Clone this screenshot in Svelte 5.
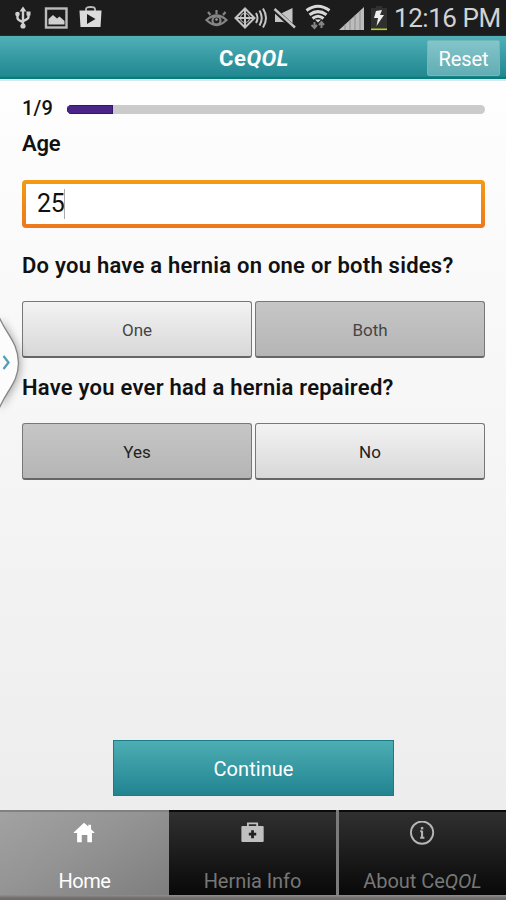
<script>
  let age = $state('25');
  let sides = $state('Both');
  let repaired = $state('Yes');
  const step = 1;
  const total = 9;
</script>

<div class="phone">
  <div class="status">
    <svg class="status-icons" width="390" height="36" viewBox="0 0 390 36">
      <g stroke="#d0d0d0" fill="none" stroke-width="2.400">
        <path d="M23 9V26M17.500 14V18Q17.500 20 23 22M28.500 13V17Q28.500 19 23 21" />
      </g>
      <g fill="#d0d0d0">
        <path d="M23 6.500L26.500 11.500H19.500Z" />
        <circle cx="23" cy="26" r="2.600" />
        <rect x="26.500" y="11.500" width="4" height="4" />
        <circle cx="17.500" cy="14" r="2.300" />
      </g>
      <rect x="46" y="8.500" width="20.500" height="19" fill="none" stroke="#bcbcbc" stroke-width="2.400" />
      <path d="M48.500 24.500V19L53 15L57 18.500L59.500 16.500L64.500 21V24.500Z" fill="#d0d0d0" />
      <path d="M86 11V9Q86 7 90.500 7T95 9V11" fill="none" stroke="#bcbcbc" stroke-width="1.800" />
      <path d="M79.500 10.500H101.500L100.500 27H80.500Z" fill="#dcdcdc" />
      <path d="M87 14L95.500 19L87 24Z" fill="#1c1c1c" />

      <g stroke="#858585" fill="none" stroke-width="2.200">
        <path d="M206.500 20Q216.500 11 226.500 20Q216.500 30 206.500 20Z" />
        <path d="M216.500 10V14M208 12L210.500 15M225.500 12L223 15" />
        <circle cx="216.500" cy="20.500" r="4" />
      </g>
      <circle cx="216.500" cy="19.500" r="1.300" fill="#a0a0a0" />
      <g stroke="#c4c4c4" fill="none" stroke-width="2">
        <path d="M235.500 18L245 8.500L254.500 18L245 27.500Z" />
        <path d="M235 18H255M245 8V28" />
        <circle cx="245" cy="18" r="4.500" stroke-width="1.200" />
        <path d="M256 13Q259 18 256 23M259.500 10.500Q264 18 259.500 25.500M263 8.500Q269 18 263 27.500" />
      </g>
      <path d="M275 13H282L292.500 8V25.500L289 24L283 22H275Z" fill="#c4c4c4" />
      <path d="M273 8.500L294 28" stroke="#1c1c1c" stroke-width="5" />
      <path d="M274.500 9L295 27.500" stroke="#c4c4c4" stroke-width="2.400" />
      <g stroke="#d8d8d8" fill="none" stroke-width="3">
        <path d="M306.500 10.500Q318 2 329.500 10.500M309.500 14.800Q318 8.500 326.500 14.800M312.500 18.500Q318 14 323.500 18.500" />
      </g>
      <path d="M315 19.500H321L318 22.500Z" fill="#e0e0e0" />
      <g stroke="#858585" fill="none" stroke-width="2">
        <path d="M314.500 22V28M311.500 25L314.500 28L317 25M321.500 28V22M319 25L321.500 22L324 25" />
      </g>
      <path d="M339 30L364 7V30Z" fill="#bcbcbc" />
      <path d="M345 24.500V30M350 20V30M355 15.500V30M360 11V30" stroke="#8e8e8e" stroke-width="1" />
      <path d="M372 8H376V6H382V8H387V29H371V8Z" fill="#303030" />
      <path d="M376 11L382 10L380 15H384L376.500 26L378 18H374Z" fill="#eee" />
      <path d="M371 29.300H387" stroke="#b4d21c" stroke-width="1.600" />
    </svg>
    <span class="clock">12:16 PM</span>
  </div>

  <header>
    <h1>Ce<i>QOL</i></h1>
    <button class="reset">Reset</button>
  </header>

  <main>
    <div class="progress">
      <span>{step}/{total}</span>
      <div class="track"><div class="bar" style="width: {(step / total) * 100}%"></div></div>
    </div>
    <h2 class="age-label">Age</h2>
    <div class="field"><span>{age}</span><b class="caret"></b></div>

    <h2 class="first">Do you have a hernia on one or both sides?</h2>
    <div class="options">
      {#each ['One', 'Both'] as option}
        <button class:selected={sides === option} onclick={() => (sides = option)}>{option}</button>
      {/each}
    </div>
    <h2 class="second">Have you ever had a hernia repaired?</h2>
    <div class="options dark">
      {#each ['Yes', 'No'] as option}
        <button class:selected={repaired === option} onclick={() => (repaired = option)}>{option}</button>
      {/each}
    </div>
    <button class="continue">Continue</button>
  </main>

  <nav>
    <div class="tab active">
      <svg width="28" height="28" viewBox="0 0 28 28">
        <path d="M13 2L17.500 6V4H20.500V8.800L24 12V13H21.500V23H16.500V15H10.500V23H5.500V13H2V12Z" fill="#fff" />
      </svg>
      <span>Home</span>
    </div>
    <div class="tab">
      <svg width="28" height="28" viewBox="0 0 28 28">
        <path d="M8.500 7V2.500H18.500V7" fill="none" stroke="#c0c0c0" stroke-width="2" />
        <rect x="1.500" y="5.500" width="24" height="17" rx="1" fill="#c0c0c0" />
        <path d="M13.500 10V18.500M9.500 14.200H17.500" stroke="#202020" stroke-width="3" />
      </svg>
      <span>Hernia Info</span>
    </div>
    <div class="tab">
      <svg width="28" height="28" viewBox="0 0 28 28">
        <circle cx="13" cy="12.500" r="12" fill="none" stroke="#b5b5b5" stroke-width="2" />
        <path d="M13 10.500V18.500M11 11H13M11 18H15.500" stroke="#b5b5b5" stroke-width="2.200" />
        <rect x="11.700" y="6.500" width="2.600" height="2.600" fill="#b5b5b5" />
      </svg>
      <span class="about">About Ce<i>QOL</i></span>
    </div>
  </nav>

  <div class="drawer">
    <svg width="32" height="110" viewBox="0 0 32 110">
      <path d="M-3 2C5 24 18 31 18.500 53C18 75 5 80 -3 104Z" fill="#fcfcfc" stroke="#868686" stroke-width="1.300" />
      <path d="M3.500 46L8.500 52.500L3.500 59" fill="none" stroke="#559fb8" stroke-width="2.300" />
    </svg>
  </div>
</div>

<style>
  .phone {
    position: relative;
    width: 506px;
    height: 900px;
    display: flex;
    flex-direction: column;
    overflow: hidden;
    font-family: Roboto, "Liberation Sans", sans-serif;
    color: #111;
  }
  * { box-sizing: border-box; }
  button { font-family: inherit; padding: 0; margin: 0; }
  h1, h2 { margin: 0; white-space: nowrap; }
  .status {
    height: 36px;
    flex: none;
    display: flex;
    background: #1c1c1c;
    border-bottom: 1px solid #172d2e;
  }
  .status-icons { flex: none; }
  .clock {
    color: #d2d2d2;
    font-size: 26px;
    line-height: 37px;
    letter-spacing: -0.45px;
    margin-left: 4px;
    white-space: nowrap;
  }
  header {
    height: 45px;
    flex: none;
    display: grid;
    grid-template-columns: 80px 1fr 80px;
    align-items: start;
    background: linear-gradient(#50b0b7, #218791 94%, #087c78 95%);
    border-bottom: 2px solid #d5eaee;
  }
  h1 {
    grid-column: 2;
    text-align: center;
    color: #fff;
    font-size: 22px;
    line-height: 46px;
    font-weight: 700;
    letter-spacing: 0.5px;
    padding-left: 2px;
  }
  .reset {
    width: 73px;
    height: 36px;
    margin-top: 4px;
    margin-left: 1px;
    padding-top: 2px;
    border: 1px solid #71b8be;
    border-radius: 2px;
    background: linear-gradient(#83c5ca, #62adb4);
    color: #fff;
    font-size: 20px;
    font-weight: 400;
    letter-spacing: -0.1px;
  }
  main {
    flex: 1;
    display: flex;
    flex-direction: column;
    padding: 0 21px 0 22px;
    background: linear-gradient(#fefefe, #ededed);
  }
  .progress {
    display: flex;
    align-items: center;
    height: 28px;
    margin-top: 13px;
    font-size: 20px;
    font-weight: 500;
    gap: 14px;
  }
  .progress span { width: 31px; letter-spacing: 0.2px; }
  .track {
    flex: 1;
    height: 9px;
    margin-top: 2px;
    border-radius: 5px;
    overflow: hidden;
    background: #cbcbcb;
  }
  .bar { height: 100%; background: #4a2489; border: 1px solid #37156c; }
  h2 { font-size: 22px; line-height: 28px; font-weight: 600; letter-spacing: 0.24px; }
  .age-label { margin-top: 8px; letter-spacing: -0.2px; }
  .field {
    height: 48px;
    flex: none;
    margin-top: 22px;
    display: flex;
    align-items: center;
    padding: 0 11px 1px;
    font-size: 25px;
    letter-spacing: -0.4px;
    border: 4px solid transparent;
    border-radius: 4px;
    background: linear-gradient(#fff, #fff) padding-box, linear-gradient(#f39b14, #ee781d) border-box;
  }
  .caret { width: 1px; height: 30px; background: #aaa; }
  .first { margin-top: 24px; }
  .options { display: flex; gap: 3px; height: 57px; flex: none; }
  .first + .options { margin-top: 21px; }
  .second { margin-top: 16px; }
  .second + .options { margin-top: 21px; }
  .options button {
    flex: 1;
    border: 1px solid #777;
    border-bottom: 2px solid #666;
    border-radius: 3px;
    background: linear-gradient(#f3f3f3, #d8d8d8);
    color: #454545;
    font-size: 17px;
    padding-top: 1px;
  }
  .options button.selected { background: linear-gradient(#c6c6c6, #b5b5b5); }
  .options.dark button { color: #222; }
  .continue {
    align-self: center;
    width: 281px;
    height: 56px;
    flex: none;
    margin-top: auto;
    margin-bottom: 14px;
    padding-top: 1px;
    border: 1px solid #187d88;
    background: linear-gradient(#4dadb3, #218491);
    color: #fff;
    font-size: 20px;
    font-weight: 400;
    letter-spacing: 0.05px;
  }
  nav {
    height: 90px;
    flex: none;
    display: flex;
    gap: 3px;
    padding-bottom: 5px;
    background: linear-gradient(#7b7b7b 95%, #8d8989 95%, #6f6c6c 98%);
  }
  .tab {
    flex: 1;
    display: flex;
    flex-direction: column;
    align-items: center;
    padding-top: 9px;
    border-top: 2px solid #0b0b0b;
    background: linear-gradient(#303030, #080808);
    color: #777;
  }
  .tab.active {
    flex: 0 0 169px;
    margin-right: -3px;
    border-top-color: #818181;
    background: linear-gradient(150deg, #a2a2a2, #949494 45%, #7e7e7e);
    color: #fff;
  }
  .tab span {
    margin-top: 20px;
    font-size: 20px;
    line-height: 28px;
    letter-spacing: -0.05px;
    white-space: nowrap;
  }
  .tab.active span { letter-spacing: -0.5px; }
  .tab .about { letter-spacing: -0.05px; }
  .drawer { position: absolute; left: 0; top: 310px; height: 110px; }
  .drawer svg { display: block; filter: drop-shadow(1px 1px 4px rgba(0, 0, 0, 0.35)); }
</style>
